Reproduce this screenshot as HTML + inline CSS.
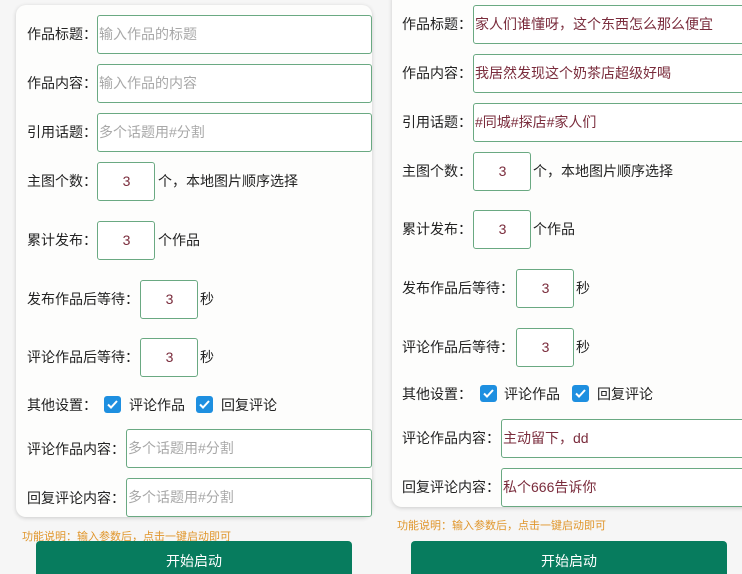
<!DOCTYPE html>
<html><head><meta charset="utf-8"><style>
*{box-sizing:border-box;margin:0;padding:0}
html,body{width:742px;height:574px;overflow:hidden}
body{background:#f6f6f6;position:relative;font-family:"Liberation Sans","Noto Sans CJK SC",sans-serif;font-size:14px;color:#222}
.card{position:absolute;background:#fdfdfc;border-radius:10px;box-shadow:0 1px 4px rgba(0,0,0,.18)}
.l{position:absolute;white-space:nowrap;line-height:20px}
.in{position:absolute;border:1.5px solid #6aa982;border-radius:3px;background:#fff;height:39px;line-height:36px;padding-left:1px;white-space:nowrap;overflow:hidden}
.ph{color:#a8a8a8}
.v{color:#7a2c3c}
.n{width:58px;text-align:center;color:#7a2c3c}
.cb{position:absolute;width:17px;height:17px;background:#1e8fe0;border-radius:3px}
.cb svg{position:absolute;left:2px;top:2px}
.note{position:absolute;font-size:11px;color:#e0962c;white-space:nowrap}
.btn{position:absolute;height:40px;background:#077c5e;border-radius:4px;color:#fff;text-align:center;line-height:40px;font-size:14px}
</style></head><body>
<div class="card" style="left:16px;top:5px;width:356px;height:512px"></div>
<div class="card" style="left:392px;top:-10px;width:360px;height:517px"></div>

<!-- left -->
<div class="l" style="left:27px;top:24px">作品标题：</div>
<div class="in ph" style="left:97px;top:15px;width:275px">输入作品的标题</div>
<div class="l" style="left:27px;top:73px">作品内容：</div>
<div class="in ph" style="left:97px;top:64px;width:275px">输入作品的内容</div>
<div class="l" style="left:27px;top:122px">引用话题：</div>
<div class="in ph" style="left:97px;top:113px;width:275px">多个话题用#分割</div>
<div class="l" style="left:27px;top:171px">主图个数：</div>
<div class="in n" style="left:97px;top:162px">3</div>
<div class="l" style="left:158px;top:171px">个，本地图片顺序选择</div>
<div class="l" style="left:27px;top:230px">累计发布：</div>
<div class="in n" style="left:97px;top:221px">3</div>
<div class="l" style="left:158px;top:230px">个作品</div>
<div class="l" style="left:27px;top:289px">发布作品后等待：</div>
<div class="in n" style="left:140px;top:280px">3</div>
<div class="l" style="left:200px;top:289px">秒</div>
<div class="l" style="left:27px;top:347px">评论作品后等待：</div>
<div class="in n" style="left:140px;top:338px">3</div>
<div class="l" style="left:200px;top:347px">秒</div>
<div class="l" style="left:27px;top:395px">其他设置：</div>
<div class="cb" style="left:104px;top:396px"><svg width="13" height="13"><path d="M2 6.5l3 3 6-6.5" stroke="#fff" stroke-width="2" fill="none"/></svg></div>
<div class="l" style="left:129px;top:395px">评论作品</div>
<div class="cb" style="left:196px;top:396px"><svg width="13" height="13"><path d="M2 6.5l3 3 6-6.5" stroke="#fff" stroke-width="2" fill="none"/></svg></div>
<div class="l" style="left:221px;top:395px">回复评论</div>
<div class="l" style="left:27px;top:439px">评论作品内容：</div>
<div class="in ph" style="left:126px;top:429px;width:246px">多个话题用#分割</div>
<div class="l" style="left:27px;top:488px">回复评论内容：</div>
<div class="in ph" style="left:126px;top:478px;width:246px">多个话题用#分割</div>
<div class="note" style="left:22px;top:528px">功能说明：输入参数后，点击一键启动即可</div>
<div class="btn" style="left:36px;top:541px;width:316px">开始启动</div>

<!-- right -->
<div class="l" style="left:402px;top:14px">作品标题：</div>
<div class="in v" style="left:473px;top:5px;width:280px">家人们谁懂呀，这个东西怎么那么便宜</div>
<div class="l" style="left:402px;top:63px">作品内容：</div>
<div class="in v" style="left:473px;top:54px;width:280px">我居然发现这个奶茶店超级好喝</div>
<div class="l" style="left:402px;top:112px">引用话题：</div>
<div class="in v" style="left:473px;top:103px;width:280px">#同城#探店#家人们</div>
<div class="l" style="left:402px;top:161px">主图个数：</div>
<div class="in n" style="left:473px;top:152px">3</div>
<div class="l" style="left:533px;top:161px">个，本地图片顺序选择</div>
<div class="l" style="left:402px;top:219px">累计发布：</div>
<div class="in n" style="left:473px;top:210px">3</div>
<div class="l" style="left:533px;top:219px">个作品</div>
<div class="l" style="left:402px;top:278px">发布作品后等待：</div>
<div class="in n" style="left:516px;top:269px">3</div>
<div class="l" style="left:576px;top:278px">秒</div>
<div class="l" style="left:402px;top:337px">评论作品后等待：</div>
<div class="in n" style="left:516px;top:328px">3</div>
<div class="l" style="left:576px;top:337px">秒</div>
<div class="l" style="left:402px;top:384px">其他设置：</div>
<div class="cb" style="left:480px;top:385px"><svg width="13" height="13"><path d="M2 6.5l3 3 6-6.5" stroke="#fff" stroke-width="2" fill="none"/></svg></div>
<div class="l" style="left:504px;top:384px">评论作品</div>
<div class="cb" style="left:572px;top:385px"><svg width="13" height="13"><path d="M2 6.5l3 3 6-6.5" stroke="#fff" stroke-width="2" fill="none"/></svg></div>
<div class="l" style="left:597px;top:384px">回复评论</div>
<div class="l" style="left:402px;top:428px">评论作品内容：</div>
<div class="in v" style="left:501px;top:419px;width:252px">主动留下，dd</div>
<div class="l" style="left:402px;top:477px">回复评论内容：</div>
<div class="in v" style="left:501px;top:468px;width:252px">私个666告诉你</div>
<div class="note" style="left:397px;top:517px">功能说明：输入参数后，点击一键启动即可</div>
<div class="btn" style="left:411px;top:541px;width:316px">开始启动</div>
</body></html>
